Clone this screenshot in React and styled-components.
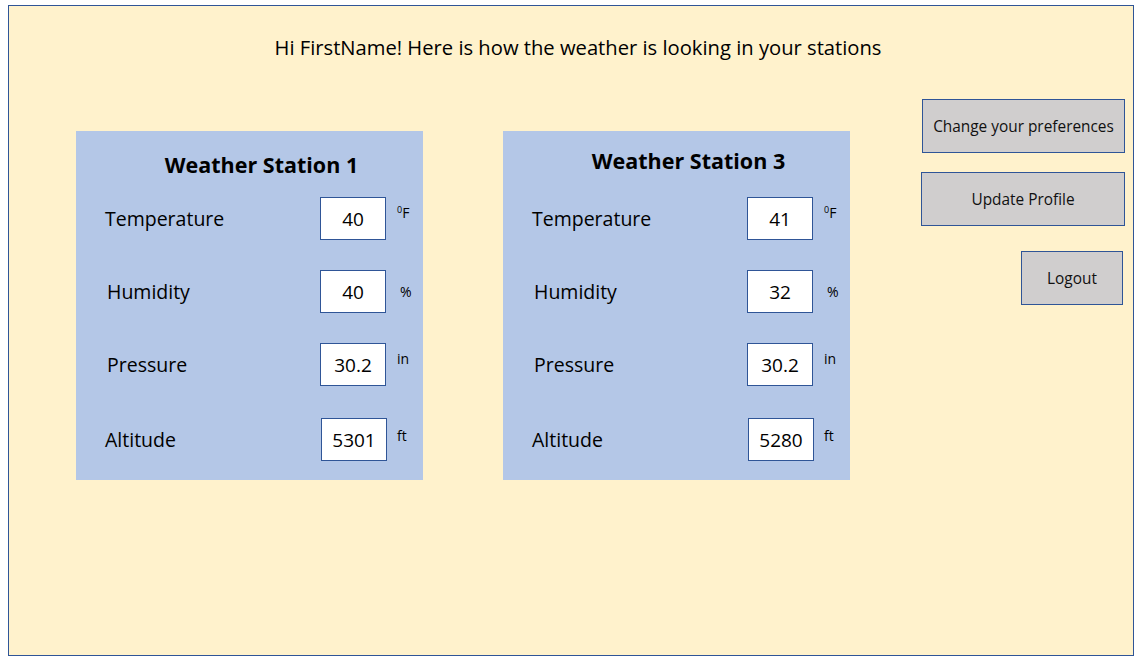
import React from 'react';
import styled, { createGlobalStyle } from 'styled-components';

const GlobalStyle = createGlobalStyle`
  body {
    margin: 0;
    background: #ffffff;
    font-family: "Open Sans", "Liberation Sans", sans-serif;
    color: #000000;
  }
`;

const Frame = styled.div`
  box-sizing: border-box;
  width: 1126px;
  height: 651px;
  margin: 5px 0 0 8px;
  background: #FFF2CC;
  border: 1px solid #2F5597;
  display: flex;
  flex-direction: column;
`;

const Greeting = styled.div`
  padding-top: 27px;
  line-height: 28px;
  font-size: 20.2px;
  text-align: center;
  margin-left: 14px;
`;

const Content = styled.div`
  display: flex;
  align-items: flex-start;
  padding: 0 8px 0 67px;
`;

const Cards = styled.div`
  display: flex;
  gap: 80px;
  margin-top: 70px;
`;

const Card = styled.div`
  box-sizing: border-box;
  width: 347px;
  height: 349px;
  background: #B4C7E7;
  display: flex;
  flex-direction: column;
`;

const Title = styled.div`
  margin-top: ${p => p.top}px;
  margin-left: 24px;
  text-align: center;
  font-size: 21.5px;
  font-weight: 700;
  line-height: 26px;
`;

const Row = styled.div`
  display: flex;
  align-items: center;
  height: 43px;
  margin-top: ${p => p.mt}px;
  padding-left: ${p => p.indent}px;
`;

const Label = styled.div`
  width: ${p => 244 - p.indent}px;
  font-size: 19.5px;
`;

const ValueBox = styled.div`
  box-sizing: border-box;
  width: 66px;
  height: 43px;
  background: #ffffff;
  border: 1px solid #2F5597;
  display: flex;
  align-items: center;
  justify-content: center;
  font-size: 19px;
  margin-left: ${p => p.shift}px;
`;

const Unit = styled.div`
  margin-left: ${p => p.gap}px;
  font-size: 14px;
  align-self: flex-start;
  margin-top: ${p => p.top}px;
  sup {
    font-size: 9px;
    vertical-align: 5px;
  }
`;

const Actions = styled.div`
  margin-left: auto;
  margin-top: 38px;
  display: flex;
  flex-direction: column;
  align-items: flex-end;
`;

const Button = styled.button`
  box-sizing: border-box;
  width: ${p => p.w}px;
  height: 54px;
  margin-top: ${p => p.mt}px;
  margin-right: ${p => p.mr}px;
  background: #D0CECE;
  border: 1px solid #2F5597;
  font-family: "Open Sans", "Liberation Sans", sans-serif;
  font-size: 15.4px;
  color: #111111;
  padding: 0;
  cursor: pointer;
`;

const stations = [
  {
    id: 1,
    name: 'Weather Station 1',
    titleTop: 21,
    values: ['40', '40', '30.2', '5301']
  },
  {
    id: 3,
    name: 'Weather Station 3',
    titleTop: 17,
    values: ['41', '32', '30.2', '5280']
  }
];

const rows = [
  { label: 'Temperature', indent: 29, mt: 0, unit: 'F', sup: '0', unitTop: 6, gap: 11 },
  { label: 'Humidity', indent: 31, mt: 30, unit: '%', unitTop: 12, gap: 14 },
  { label: 'Pressure', indent: 31, mt: 30, unit: 'in', unitTop: 6, gap: 11 },
  { label: 'Altitude', indent: 29, mt: 32, unit: 'ft', unitTop: 8, gap: 10 }
];

const Station = ({ station }) => (
  <Card>
    <Title top={station.titleTop}>{station.name}</Title>
    <div style={{ marginTop: 66 - station.titleTop - 26 }}>
      {rows.map((row, i) => (
        <Row key={row.label} mt={row.mt} indent={row.indent}>
          <Label indent={row.indent}>{row.label}</Label>
          <ValueBox shift={i === 3 ? 1 : 0}>{station.values[i]}</ValueBox>
          <Unit gap={row.gap} top={row.unitTop}>
            {row.sup && <sup>{row.sup}</sup>}
            {row.unit}
          </Unit>
        </Row>
      ))}
    </div>
  </Card>
);

const App = () => (
  <>
    <GlobalStyle />
    <Frame>
      <Greeting>Hi FirstName! Here is how the weather is looking in your stations</Greeting>
      <Content>
        <Cards>
          {stations.map(s => <Station key={s.id} station={s} />)}
        </Cards>
        <Actions>
          <Button w={203} mt={0} mr={0}>Change your preferences</Button>
          <Button w={204} mt={19} mr={0}>Update Profile</Button>
          <Button w={102} mt={25} mr={2}>Logout</Button>
        </Actions>
      </Content>
    </Frame>
  </>
);

export default App;
